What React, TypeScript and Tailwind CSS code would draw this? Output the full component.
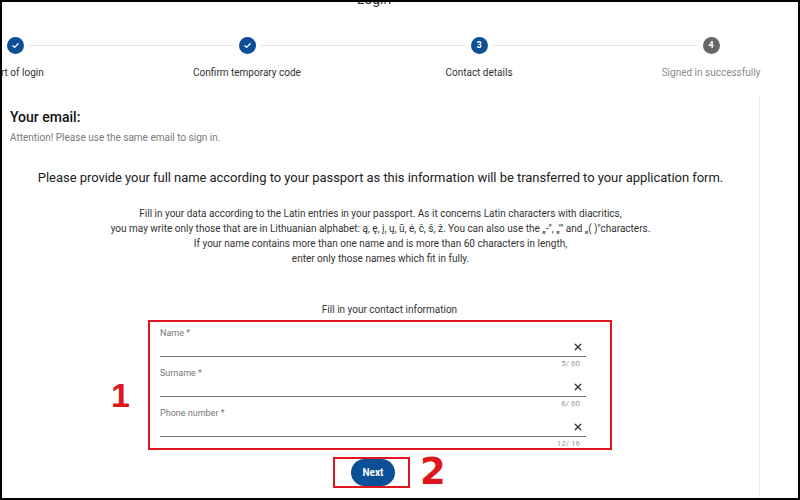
import React from 'react';

const font = { fontFamily: 'Roboto, "Noto Sans", sans-serif' };
const markFont = { fontFamily: '"Liberation Sans", Arial, sans-serif' };

type Step = { label: string; state: 'done' | 'active' | 'todo'; num: number };

const steps: Step[] = [
  { label: 'Start of login', state: 'done', num: 1 },
  { label: 'Confirm temporary code', state: 'done', num: 2 },
  { label: 'Contact details', state: 'active', num: 3 },
  { label: 'Signed in successfully', state: 'todo', num: 4 },
];

const Check = () => (
  <svg width="9" height="9" viewBox="0 0 24 24" fill="none" stroke="white" strokeWidth="3.5" strokeLinecap="round" strokeLinejoin="round">
    <path d="M5 12.5l4.5 4.5L19 7.5" />
  </svg>
);

const StepItem: React.FC<{ step: Step; first: boolean; last: boolean }> = ({ step, first, last }) => (
  <div className="w-[232px] shrink-0 flex flex-col items-center">
    <div className="flex items-center w-full h-[17px]">
      <div className={`flex-1 h-px mr-[5px] ${first ? 'bg-transparent' : 'bg-[#e4e4e4]'}`} />
      <div
        className={`w-[17px] h-[17px] rounded-full flex items-center justify-center text-white text-[9px] font-bold ${
          step.state === 'todo' ? 'bg-[#676767]' : 'bg-[#0b4f96]'
        }`}
      >
        {step.state === 'done' ? <Check /> : step.num}
      </div>
      <div className={`flex-1 h-px ml-[5px] ${last ? 'bg-transparent' : 'bg-[#e4e4e4]'}`} />
    </div>
    <div className={`mt-[12px] text-[10px] leading-[14px] whitespace-nowrap ${step.state === 'todo' ? 'text-[#8a8a8a]' : 'text-[#333]'}`}>
      {step.label}
    </div>
  </div>
);

const Field: React.FC<{ label: string; counter: string }> = ({ label, counter }) => (
  <div className="flex flex-col">
    <div className="text-[9px] leading-[10px] text-[#777]">{label}</div>
    <div className="h-[19px] flex items-center justify-end pr-[4px] border-b border-[#6f6f6f]">
      <svg width="8" height="8" viewBox="0 0 10 10" stroke="#333" strokeWidth="1.6" strokeLinecap="round">
        <path d="M1.5 1.5l7 7M8.5 1.5l-7 7" />
      </svg>
    </div>
    <div className="h-[11px] flex items-end justify-end pr-[6px] text-[8px] leading-[9px] text-[#9a9a9a]">{counter}</div>
  </div>
);

export default function App() {
  return (
    <div style={font} className="w-[800px] h-[500px] border-2 border-black bg-white overflow-hidden flex flex-col">
      <div className="text-[14px] leading-[16px] text-[#333] text-center pr-[52px] -mt-[11px]">Login</div>

      <div className="flex ml-[-103px] mt-[30px]">
        {steps.map((s, i) => (
          <StepItem key={s.label} step={s} first={i === 0} last={i === steps.length - 1} />
        ))}
      </div>

      <div className="w-[758px] flex-1 mt-[17px] border-r border-[#ececec] flex flex-col">
        <div className="pl-[8px] pt-[11px]">
          <div className="text-[14px] leading-[18px] font-medium text-[#111]">Your email:</div>
          <div className="mt-[6px] text-[10px] leading-[12px] text-[#7a7a7a]">Attention! Please use the same email to sign in.</div>
        </div>

        <div className="mt-[26px] text-center text-[13px] leading-[16px] tracking-[-0.05px] text-[#222]">
          Please provide your full name according to your passport as this information will be transferred to your application form.
        </div>

        <div className="mt-[20px] text-center text-[10px] leading-[15px] text-[#333]">
          <div>Fill in your data according to the Latin entries in your passport. As it concerns Latin characters with diacritics,</div>
          <div>you may write only those that are in Lithuanian alphabet: ą, ę, į, ų, ū, ė, č, š, ž. You can also use the „-", „'" and „( )"characters.</div>
          <div>If your name contains more than one name and is more than 60 characters in length,</div>
          <div>enter only those names which fit in fully.</div>
        </div>

        <div className="mt-[38px] text-center text-[10px] leading-[12px] text-[#333] pl-[18px]">Fill in your contact information</div>

        <div className="mt-[4px] ml-[146px] relative w-[464px] border-2 border-[#e0161e] pt-[6px] pl-[10px] pr-[24px]">
          <div className="absolute right-full mr-[20px] top-[56px] text-[34px] leading-[34px] font-bold text-[#e0161e]" style={markFont}>
            1
          </div>
          <Field label="Name *" counter="5/ 60" />
          <Field label="Surname *" counter="6/ 60" />
          <Field label="Phone number *" counter="12/ 16" />
        </div>

        <div className="mt-[7px] ml-[331px] relative w-[77px] h-[31px] border-2 border-[#e0161e] pl-[16px]">
          <button className="w-[44px] h-[27px] rounded-full bg-[#0b4f96] text-white text-[10px] font-bold">Next</button>
          <div className="absolute left-full ml-[12px] -top-[6px] text-[37px] leading-[37px] font-bold text-[#e0161e]" style={{ fontFamily: '"DejaVu Sans", sans-serif' }}>
            2
          </div>
        </div>
      </div>
    </div>
  );
}
